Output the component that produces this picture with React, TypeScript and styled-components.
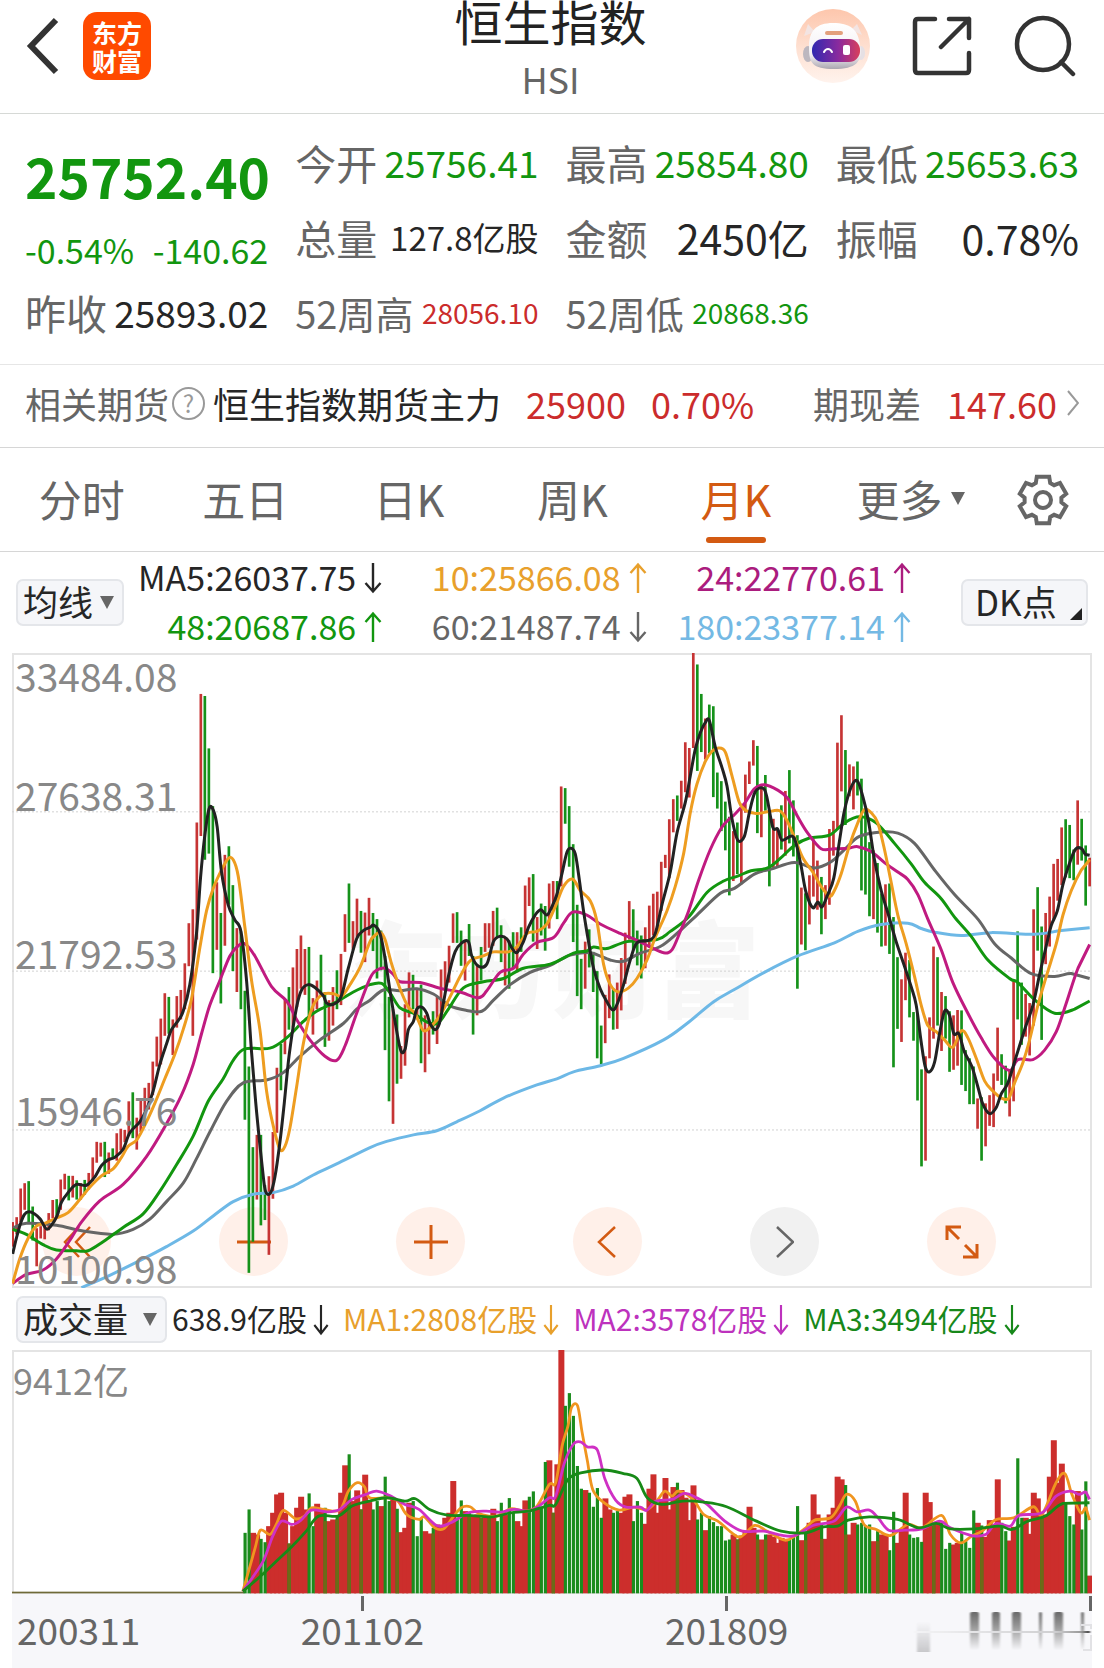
import React, { useState } from "react";
import styled, { createGlobalStyle } from "styled-components";

const GREEN = "#12960f";
const RED = "#cb2c2c";
const ACCENT = "#d35a12";
const INK = "#262626";
const MUTED = "#666666";

const GlobalStyle = createGlobalStyle`
  * { box-sizing: border-box; }
  body {
    margin: 0;
    background: #ffffff;
    color: ${INK};
    font-family: "Noto Sans CJK SC", "Noto Sans", sans-serif;
  }
  button, select { font-family: inherit; color: inherit; }
  button { border: 0; padding: 0; background: none; cursor: pointer; }
  h1, p, dl, dt, dd { margin: 0; font-weight: 400; }
`;

/* ---------- header ---------- */

const Header = styled.header`
  display: grid;
  grid-template-columns: 1fr auto 1fr;
  height: 114px;
  padding: 0 28px 0 25px;
  border-bottom: 1px solid #d6d9d6;
`;

const HeaderLeft = styled.div`
  display: flex;
  gap: 24px;
  padding-top: 12px;
`;

const HeaderRight = styled.div`
  display: flex;
  justify-content: flex-end;
  gap: 42px;
  padding-top: 9px;
`;

const IconButton = styled.button`
  display: flex;
  align-items: center;
  height: 74px;

  svg { display: block; }
`;

const BackButton = styled(IconButton)`
  height: 68px;
`;

const Logo = styled.div`
  display: grid;
  place-content: center;
  width: 68px;
  height: 68px;
  border-radius: 14px;
  background: #ff4a00;
  color: #ffffff;
  font-size: 25px;
  line-height: 28px;
  font-weight: 700;
  text-align: center;
`;

const Title = styled.div`
  text-align: center;

  h1 { font-size: 48px; line-height: 40px; font-weight: 400; color: #222222; }
  p { margin-top: 18px; font-size: 36px; line-height: 40px; color: ${MUTED}; }
`;

/* ---------- quote ---------- */

const Quote = styled.section`
  display: grid;
  grid-template-columns: repeat(4, minmax(0, 1fr));
  grid-auto-rows: 75px;
  column-gap: 27px;
  padding: 11px 25px 14px;
  border-bottom: 1px solid #e6e6e6;
`;

const PriceBlock = styled.div`
  grid-row: span 2;
  color: ${GREEN};
`;

const Price = styled.div`
  font-size: 55px;
  line-height: 100px;
  font-weight: 700;
`;

const Change = styled.div`
  display: flex;
  justify-content: space-between;
  font-size: 34px;
  line-height: 50px;
`;

const Stat = styled.dl`
  display: flex;
  align-items: center;
  justify-content: space-between;
  white-space: nowrap;
`;

const StatLabel = styled.dt<{ $size: number }>`
  font-size: ${(p) => p.$size}px;
  line-height: 75px;
  color: ${MUTED};
`;

const StatValue = styled.dd<{ $size: number; $color: string }>`
  font-size: ${(p) => p.$size}px;
  line-height: 75px;
  color: ${(p) => p.$color};
`;

/* ---------- futures strip ---------- */

const Futures = styled.a`
  display: flex;
  align-items: center;
  justify-content: space-between;
  height: 83px;
  padding: 0 25px 6px;
  border-bottom: 1px solid #d6d6d6;
  color: ${INK};
  font-size: 36px;
  line-height: 48px;
  text-decoration: none;
  white-space: nowrap;
`;

const FuturesGroup = styled.span<{ $gap: number }>`
  display: flex;
  align-items: center;
  gap: ${(p) => p.$gap}px;
`;

const Tone = styled.span<{ $color: string }>`
  color: ${(p) => p.$color};
`;

const HelpMark = styled.span`
  display: grid;
  place-items: center;
  width: 33px;
  height: 33px;
  margin: 0 8px 0 3px;
  border: 2px solid #999999;
  border-radius: 50%;
  color: #999999;
  font-size: 24px;
  line-height: 28px;
`;

/* ---------- tabs ---------- */

const Tabs = styled.nav`
  display: grid;
  grid-template-columns: repeat(6, 4fr) 3fr;
  height: 104px;
  border-bottom: 1px solid #d6d6d6;
`;

const Tab = styled.button<{ $active?: boolean }>`
  display: flex;
  flex-direction: column;
  align-items: center;
  padding-top: 19px;
  font-size: 43px;
  line-height: 62px;
  color: ${(p) => (p.$active ? ACCENT : MUTED)};

  &::after {
    content: "";
    width: 60px;
    height: 6px;
    margin-top: 8px;
    border-radius: 3px;
    background: ${(p) => (p.$active ? ACCENT : "transparent")};
  }
`;

const MoreLabel = styled.span`
  display: flex;
  align-items: center;
  gap: 8px;
  padding-left: 22px;
`;

const GearButton = styled.button`
  display: grid;
  place-items: center;
`;

/* ---------- averages legend ---------- */

const Averages = styled.section`
  display: flex;
  align-items: center;
  height: 101px;
  padding: 0 16px;
`;

const Picker = styled.div<{ $width: number }>`
  display: grid;
  align-items: center;
  flex: none;
  width: ${(p) => p.$width}px;
  height: 47px;
  border: 2px solid #e4e6ea;
  border-radius: 7px;
  background: #f5f6f9;

  > * { grid-area: 1 / 1; }
  svg { justify-self: end; margin-right: 8px; pointer-events: none; }
`;

const PickerSelect = styled.select`
  appearance: none;
  width: 100%;
  height: 43px;
  padding: 0 0 4px 5px;
  border: 0;
  background: transparent;
  font-size: 35px;
  line-height: 39px;
  color: ${INK};
`;

const DkButton = styled.button`
  display: flex;
  align-items: center;
  justify-content: space-between;
  flex: none;
  width: 127px;
  height: 47px;
  padding: 0 4px 4px 12px;
  border: 2px solid #e4e6ea;
  border-radius: 7px;
  background: #f5f6f9;
  font-size: 35px;
  line-height: 39px;
  white-space: nowrap;

  svg { align-self: flex-end; }
`;

const AverageGrid = styled.div`
  display: grid;
  grid-template-columns: 243fr 265fr 265fr;
  flex: 1;
  margin: 0 50px 0 14px;
  padding-bottom: 4px;
  font-size: 34px;
  line-height: 49px;
`;

const Reading = styled.span<{ $color: string; $gap: number }>`
  display: flex;
  align-items: center;
  justify-content: flex-end;
  gap: ${(p) => p.$gap}px;
  color: ${(p) => p.$color};
  white-space: nowrap;

  svg { margin-top: 4px; }
`;

/* ---------- charts ---------- */

const Plot = styled.section<{ $height: number }>`
  display: grid;
  grid-template-columns: 100%;
  grid-template-rows: 100%;
  height: ${(p) => p.$height}px;
  margin: 0 12px;
  box-shadow: inset 0 0 0 2px #e4e4e4;

  > * { grid-area: 1 / 1; }
`;

const ChartSvg = styled.svg`
  display: block;
  width: 100%;
  height: 100%;
  pointer-events: none;
`;

const Watermark = styled.div`
  place-self: center;
  padding-bottom: 12px;
  font-size: 104px;
  line-height: 120px;
  font-weight: 900;
  color: #f7f7f7;
`;

const Scale = styled.div`
  display: grid;
  grid-template-rows: repeat(4, 1fr);
  padding: 0 0 4px 3px;
  color: #888888;
  font-size: 39px;
  line-height: 34px;
  pointer-events: none;
`;

const Band = styled.div`
  display: flex;
  flex-direction: column;
  justify-content: flex-end;

  &:first-child { justify-content: space-between; padding-top: 5px; }
`;

const Controls = styled.div`
  display: flex;
  align-self: end;
  justify-content: space-between;
  padding: 0 96px 12px 30px;
`;

const RoundButton = styled.button<{ $dim?: boolean }>`
  display: grid;
  place-items: center;
  width: 69px;
  height: 69px;
  border-radius: 50%;
  background: ${(p) => (p.$dim ? "#f1f1f1" : "#fff0e9")};
  color: ${(p) => (p.$dim ? MUTED : ACCENT)};
`;

const VolumeBar = styled.section`
  display: flex;
  align-items: center;
  gap: 5px;
  height: 62px;
  padding: 0 16px;
  font-size: 30px;
  line-height: 44px;
`;

const VolumeReadings = styled.div`
  display: flex;
  gap: 14px;
  padding-bottom: 3px;
`;

const VolumeMax = styled.span`
  padding: 4px 0 0 1px;
  font-size: 36px;
  line-height: 50px;
  color: #888888;
`;

const Axis = styled.footer`
  display: grid;
  grid-template-columns: 168fr 364fr 364fr 183fr;
  height: 74px;
  margin: 0 12px;
  background: #f7f7fa;
  color: ${MUTED};
  font-size: 37px;
  line-height: 36px;
`;

const AxisCell = styled.div<{ $align: string; $tick?: boolean }>`
  display: flex;
  flex-direction: column;
  align-items: ${(p) => p.$align};
  padding-top: 2px;
  min-width: 0;

  &::before {
    content: "";
    flex: none;
    width: 3px;
    height: 15px;
    background: ${(p) => (p.$tick ? MUTED : "transparent")};
  }
  &:first-child { padding-left: 5px; }
`;

/* ---------- chart data ---------- */

// One entry per month: direction, top and bottom of the candle in plot units.
const CANDLES = `
R1400-1460 R1388-1430 R1318-1400 R1305-1370 G1300-1400 G1362-1445 R1415-1508 R1410-1440 R1405-1442 R1378-1420
R1346-1390 G1344-1385 R1296-1370 R1282-1320 G1287-1347 R1287-1340 G1298-1345 R1305-1345 G1297-1333 R1280-1320
R1242-1300 R1204-1255 R1206-1240 G1204-1290 R1230-1282 G1220-1243 R1183-1250 R1172-1225 R1175-1205 R1105-1190
G1083-1195 R1145-1223 R1098-1180 R1072-1130 R1060-1125 R1008-1090 R947-1020 R903-1015 R841-945 G850-940
R905-992 R848-925 R833-905 R768-880 R670-775 R636-945 R424-710 R110-457 G115-515 G243-500
G384-792 R570-735 G645-866 R503-725 G482-625 G577-787 R682-838 G690-880 G835-1150 G1020-1524
G1217-1448 R1187-1345 G1187-1408 G1310-1395 R1288-1480 R1180-1343 R1023-1182 G965-1078 R856-990 G826-930
R778-925 R733-875 R700-830 R733-845 G728-905 R853-942 R810-880 G747-850 G838-972 R858-957
R826-920 G785-880 R745-870 R648-740 G573-718 R665-735 R610-705 G640-742 R644-765 R608-700
G645-738 G660-805 G688-785 G750-980 G850-1105 R880-1160 G893-1062 R970-1050 R868-1018 R790-900
G796-880 R828-905 G820-1012 R895-1034 R905-990 G885-942 R850-965 R783-900 R763-835 R725-815
R646-718 G643-718 G688-774 R712-810 G672-750 G750-942 R770-895 G728-810 R670-740 R670-730
R640-725 G632-705 G675-765 R705-822 G712-830 G692-780 R692-790 G680-740 R578-700 R558-628
G550-715 R655-733 G622-700 G628-737 R573-683 R567-640 G567-660 R336-580 G340-427 G384-532
G477-716 G625-848 G757-880 R715-830 G685-778 G740-838 G787-1000 G920-1015 R845-963 R795-902
G830-930 R815-928 R755-883 R693-818 R616-710 G636-735 G688-773 G700-805 R680-780 R627-730
R598-700 R593-680 R520-640 R503-535 R416-560 R367-448 G358-420 R322-390 R228-350 R242-363
R10-242 G38-298 G110-252 R170-270 G136-255 G140-362 G302-390 G323-445 G373-492 G410-602
R445-567 G424-550 R378-575 R307-400 R275-330 R223-285 G237-450 R330-460 G308-395 G395-580
R415-535 R440-535 G382-490 R347-505 G296-475 G370-507 G455-830 R583-722 G597-736 R553-673
R465-605 R517-637 G557-697 R577-660 R440-625 R420-505 R229-440 R162-348 G247-430 R282-360
R287-392 G275-358 G317-590 G395-600 G472-653 R492-660 G523-693 G597-727 R575-725 G573-745
G655-1022 G753-928 R807-960 R742-858 G760-900 G887-957 G892-1103 G1027-1264 R995-1250 R900-1000
R727-952 G753-920 R838-982 G848-952 G885-1033 R895-1028 R882-1018 G883-1065 G980-1080 G1000-1112
G1020-1112 R1098-1172 G1095-1250 R1110-1215 R1090-1165 R1037-1168 R925-1055 G990-1065 G1018-1110 R1030-1142
R808-1105 G690-905 G815-967 R843-947 R865-993 R636-920 G582-737 G678-955 R645-770 R605-727
R525-660 R513-615 R436-577 G416-558 G430-560 G490-565 R370-527 G415-517 G480-627 R510-580`
  .trim()
  .split(/\s+/)
  .map((item) => {
    const [top, bottom] = item.slice(1).split("-").map(Number);
    return { up: item[0] === "R", top: top - 10, bottom: bottom - 10 };
  });

// Volume bars begin at month 58; earlier months are near zero.
const VOLUME_START = 58;
const VOLUMES = `
G760 G690 R760 R765 G778 G788 R740 R700 R645 R640 R700 G792 R740 R685 R652 R690 G642 G740 R673 R690
G685 R725 R720 G710 R640 R558 G525 R665 R633 G690 R586 R668 G690 G665 R680 G592 G665 R660 G688 R758
R745 R670 G665 G770 G715 R755 R762 G745 R735 R742 R715 R700 R605 G715 G663 R695 G700 R710 R705 G715
R710 G712 R688 G725 G670 R705 G656 G700 R725 R740 R663 G652 G636 R685 G685 G548 R543 G700 R555 R213
G380 G342 G410 G560 G628 R632 G640 G682 G626 G715 R657 R690 G700 G695 R700 R652 R645 G725 G665 G700
R733 R628 R585 R700 R660 R596 R690 R623 G610 R632 R655 R722 R618 G720 G700 R752 G710 G728 G740 G740
G783 G780 R765 G780 R768 R755 R682 R745 G765 R780 G765 R765 R772 R790 R775 R780 G780 G770 G680 R782
G755 R730 R645 R705 G735 R778 R705 R685 R592 R600 G617 R765 R730 G735 G730 G740 G735 R785 G755 R765
R765 G812 G697 R790 R750 R640 G765 G775 G773 G787 R640 R668 G735 R725 G730 G808 G790 R795 R790 G760
G785 G805 G693 R730 G738 R772 R722 R740 R600 G730 G755 R783 R742 G537 G715 R715 R763 R640 R657 G715
R705 R592 R483 R610 R553 G672 G710 G735 R635 G750 G606 R888`
  .trim()
  .split(/\s+/)
  .map((item) => ({ up: item[0] === "R", top: Number(item.slice(1)) - 213 }));

type Panel = { x: number; points: string };
type Line = { color: string; panels: Panel[] };

const PRICE_LINES: Line[] = [
  {
    color: "#6db8e6",
    panels: [
      { x: -37, points: "245,1560 330,1530 430,1490 500,1460 580,1422 640,1385 700,1350 760,1332 820,1328 880,1312 940,1285 1010,1258 1110,1218" },
      { x: 1073, points: "50,1203 130,1187 200,1177 260,1155 330,1128 400,1097 500,1065 560,1050 610,1033 690,1018 760,1000 880,955 950,915 1030,862" },
      { x: 2165, points: "0,832 90,790 190,750 300,718 370,690 440,673 520,670 560,683 600,692 680,700 770,693 900,697 980,688 1065,681" },
    ],
  },
  {
    color: "#666666",
    panels: [
      { x: -37, points: "39,1415 80,1403 170,1408 250,1422 340,1430 400,1418 450,1393 500,1350 550,1305 590,1245 630,1180 680,1105 730,1060 800,1053 850,1035 900,995 960,955 1030,915 1070,880 1110,858" },
      { x: 1073, points: "40,833 90,835 140,830 190,843 240,872 290,883 335,885 370,858 420,820 480,790 540,773 600,748 660,742 720,760 760,763 810,743 870,727 920,695 980,650 1050,597" },
      { x: 2165, points: "0,585 60,550 110,538 180,522 240,535 290,520 330,490 375,458 440,447 490,450 540,475 600,540 660,600 730,660 780,720 830,755 890,793 960,800 1010,793 1065,805" },
    ],
  },
  {
    color: GREEN,
    panels: [
      { x: -37, points: "39,1418 80,1430 130,1455 170,1468 230,1470 265,1470 310,1448 370,1413 430,1380 480,1325 530,1260 580,1190 625,1105 670,1050 700,1005 735,977 810,975 860,950 910,910 950,885 1010,862 1060,838 1110,820" },
      { x: 1073, points: "35,817 60,840 90,877 130,890 175,913 205,913 235,880 280,828 340,813 400,805 460,780 540,770 610,743 650,738 670,728 710,732 770,715 860,710 900,690 955,655 1010,595 1060,567" },
      { x: 2165, points: "10,555 50,542 100,535 140,510 180,480 225,462 285,455 330,425 375,410 425,425 480,475 530,525 570,570 620,610 660,655 710,702 760,760 825,805 850,815 900,857 960,890 1020,880 1065,860" },
    ],
  },
  {
    color: "#c01a80",
    panels: [
      { x: -37, points: "39,1550 80,1528 130,1517 170,1490 210,1445 245,1400 300,1348 370,1308 440,1240 500,1160 545,1090 580,1015 605,940 630,870 660,810 690,750 715,725 735,720 765,750 815,825 860,860 890,905 930,955 975,995 1010,1005 1035,970 1070,890 1110,805" },
      { x: 1073, points: "20,785 45,780 70,795 90,813 150,815 215,830 270,838 325,852 350,835 390,790 430,780 460,745 500,717 550,705 580,670 607,643 650,650 690,672 750,695 800,712 840,728 880,742 905,735 930,690 955,640 985,565 1020,490 1055,435 1080,413" },
      { x: 2165, points: "0,405 30,378 60,342 90,332 130,345 160,365 190,410 220,450 260,488 300,488 340,487 370,483 410,495 450,522 490,545 520,563 550,600 580,660 620,735 655,815 700,890 740,950 780,1000 825,1030 850,1003 895,1003 930,980 965,935 995,865 1030,780 1065,722" },
    ],
  },
  {
    color: "#ee9d20",
    panels: [
      { x: -37, points: "39,1550 60,1490 85,1440 110,1410 135,1403 170,1390 205,1377 240,1345 270,1315 305,1287 340,1270 365,1242 385,1215 412,1198 440,1155 465,1110 495,1050 525,990 550,930 575,855 600,730 620,640 640,585 665,540 685,512 700,515 715,555 735,680 755,810 780,930 800,1080 820,1165 840,1222 855,1215 870,1170 890,1070 910,965 935,880 965,845 1000,842 1025,848 1050,820 1080,778 1110,715" },
      { x: 1073, points: "12,702 30,692 45,710 65,770 90,830 115,875 135,890 160,932 185,920 210,895 240,850 270,800 300,762 340,750 370,740 415,740 440,728 470,695 500,690 530,672 555,630 580,580 607,562 630,590 660,615 680,665 700,770 720,820 745,838 775,828 800,805 830,760 855,705 890,640 915,580 940,500 960,400 980,330 1005,275 1025,250 1045,242 1065,252 1085,310" },
      { x: 2165, points: "15,375 35,395 65,402 100,398 135,395 155,415 180,460 205,510 235,545 260,580 285,604 300,590 320,550 345,480 370,425 390,392 410,400 430,425 450,490 470,570 490,650 515,720 540,800 560,870 580,920 605,935 630,955 655,973 680,933 700,950 725,1000 750,1055 775,1080 800,1097 822,1098 840,1060 865,1010 885,955 910,870 935,800 965,720 985,650 1010,590 1040,540 1065,515" },
    ],
  },
  {
    color: "#222222",
    panels: [
      { x: -37, points: "39,1478 50,1440 62,1405 74,1382 87,1375 105,1380 122,1393 140,1417 155,1408 172,1385 185,1352 205,1328 230,1308 260,1310 285,1290 305,1262 325,1248 345,1242 370,1222 390,1182 420,1155 440,1125 460,1080 480,1015 500,965 515,930 535,908 550,885 570,820 590,695 602,560 615,455 628,390 640,393 652,435 665,545 685,625 705,662 723,690 740,810 755,985 770,1130 787,1265 797,1325 812,1328 825,1290 840,1205 853,1110 868,990 890,875 905,833 925,820 945,827 970,847 980,865 1000,868 1023,850 1045,780 1070,708 1090,688 1110,680" },
      { x: 1073, points: "12,675 30,695 45,755 60,835 75,910 92,980 105,978 115,930 130,910 140,880 155,875 170,890 180,915 195,930 208,915 220,865 235,800 255,740 275,718 295,715 305,750 325,775 350,770 370,715 390,702 410,708 425,730 440,742 460,715 475,680 495,650 512,637 530,650 545,630 560,600 575,550 590,497 602,487 615,500 625,550 640,640 655,715 670,780 690,830 710,862 728,882 742,865 760,820 780,760 800,718 835,712 855,695 875,625 900,545 920,450 945,375 960,310 975,245 990,205 1005,180 1017,175 1035,240 1055,290 1070,335 1085,415" },
      { x: 2165, points: "10,467 30,458 45,400 62,350 85,340 97,360 115,435 130,440 143,467 172,457 185,475 200,530 215,595 235,632 250,618 263,630 280,600 298,560 315,470 330,395 350,338 368,322 385,360 402,420 420,515 440,590 462,650 485,715 510,775 530,825 545,870 560,960 572,1020 585,1033 600,1010 615,940 630,885 645,895 658,940 673,940 690,985 712,1020 730,1070 745,1112 765,1135 785,1120 800,1087 820,1060 845,995 870,930 895,870 915,795 935,725 950,675 968,640 985,575 1005,523 1022,490 1040,487 1052,502 1065,504" },
    ],
  },
];

const VOLUME_LINES: Line[] = [
  {
    color: "#f0951f",
    panels: [
      { x: -35, points: "690,935 705,880 725,805 740,752 767,765 785,735 805,693 840,718 865,710 885,685 920,690 965,692 990,635 1015,610 1035,622 1050,655 1100,655 1130,665 1155,705 1190,720 1205,712 1235,745 1260,748 1285,715 1310,685 1335,682 1360,702 1410,710 1450,688 1490,695 1525,680 1560,615" },
      { x: 1533, points: "10,610 28,500 45,440 55,385 72,380 85,460 100,545 115,630 145,668 190,692 230,683 270,690 300,660 320,635 340,650 360,635 400,660 430,705 470,725 510,760 535,772 575,738 610,755 660,782 690,768 720,745 745,722 790,715 815,680 835,645 860,665 885,735 920,750 960,768 1010,735 1050,745 1105,708 1130,765 1160,790 1190,770 1220,755 1260,720 1310,715 1365,682 1390,705 1430,610 1455,583 1475,645 1500,700 1515,685 1525,722" },
    ],
  },
  {
    color: "#cf30c4",
    panels: [
      { x: -35, points: "690,935 720,890 750,840 775,770 800,725 830,735 855,722 885,692 930,697 965,690 1000,660 1040,645 1070,635 1110,650 1150,675 1190,690 1240,738 1280,730 1330,700 1380,695 1420,698 1460,690 1500,695 1530,680 1560,655" },
      { x: 1533, points: "10,650 35,550 60,495 80,488 100,503 128,512 150,600 180,662 210,683 250,683 268,693 295,665 340,660 375,642 410,655 440,675 490,725 540,755 600,755 680,770 740,738 800,725 835,683 865,697 900,692 925,715 955,752 1000,752 1050,748 1100,725 1130,745 1190,768 1230,765 1260,732 1300,740 1325,708 1390,700 1430,650 1470,635 1495,645 1515,638 1525,660" },
    ],
  },
  {
    color: "#178a17",
    panels: [
      { x: -35, points: "690,935 740,890 780,850 830,800 870,755 905,710 960,710 1000,680 1050,665 1100,655 1150,665 1180,658 1220,690 1270,707 1330,708 1400,712 1450,700 1500,695 1560,678" },
      { x: 1533, points: "10,675 45,600 85,580 145,572 200,582 240,597 270,655 310,675 370,665 430,668 495,682 580,725 650,755 720,760 770,742 810,740 840,722 900,712 980,720 1040,745 1090,732 1130,748 1200,748 1270,740 1305,750 1350,725 1400,710 1450,672 1525,670" },
    ],
  },
];

// Joins the panels of a line and rounds its corners with cubic segments.
function smoothPath(line: Line, top: number): string {
  const pts = line.panels.flatMap((panel) =>
    panel.points.split(" ").map((pair) => {
      const [x, y] = pair.split(",").map(Number);
      return [x + panel.x, y - top];
    })
  );
  let d = `M${pts[0][0]} ${pts[0][1]}`;
  for (let i = 1; i < pts.length - 1; i++) {
    const p0 = pts[i - 1];
    const p1 = pts[i];
    const p2 = pts[i + 1];
    const before = i > 1 ? pts[i - 2] : p0;
    d += `C${p0[0] + (p1[0] - before[0]) / 6} ${p0[1] + (p1[1] - before[1]) / 6} ${p1[0] - (p2[0] - p0[0]) / 6} ${p1[1] - (p2[1] - p0[1]) / 6} ${p1[0]} ${p1[1]}`;
  }
  const last = pts[pts.length - 1];
  return `${d}L${last[0]} ${last[1]}`;
}

/* ---------- icons ---------- */

const Arrow = ({ up, narrow }: { up?: boolean; narrow?: boolean }) => (
  <svg width={narrow ? 16 : 18} height="32" viewBox="0 0 18 32" fill="none" stroke="currentColor" strokeWidth="2.4" preserveAspectRatio="none" aria-hidden="true">
    <path d={up ? "M9 31V3M1.5 11 9 2.5 16.5 11" : "M9 1V29M1.5 21 9 29.5 16.5 21"} />
  </svg>
);

const Triangle = ({ size = 14 }: { size?: number }) => (
  <svg width={size} height="13" viewBox="0 0 14 13" aria-hidden="true">
    <path d="M0 0H14L7 13Z" fill="#666" />
  </svg>
);

const Gear = () => {
  const points: string[] = [];
  for (let k = 0; k < 6; k++) {
    for (const [offset, radius] of [[-23, 18.5], [-15, 24], [15, 24], [23, 18.5]]) {
      const angle = ((k * 60 - 90 + offset) * Math.PI) / 180;
      points.push(`${(27 + radius * Math.cos(angle)).toFixed(1)},${(27 + radius * Math.sin(angle)).toFixed(1)}`);
    }
  }
  return (
    <svg width="54" height="54" viewBox="0 0 54 54" fill="none" stroke="#666" strokeWidth="4" aria-hidden="true">
      <polygon points={points.join(" ")} />
      <circle cx="27" cy="27" r="8" />
    </svg>
  );
};

const Robot = () => (
  <svg width="74" height="74" viewBox="0 0 74 74" aria-hidden="true">
    <defs>
      <linearGradient id="halo" x1="0" y1="0" x2="0" y2="1">
        <stop offset="0" stopColor="#fdc6ac" />
        <stop offset="0.5" stopColor="#fedfd0" />
        <stop offset="1" stopColor="#fff3ed" />
      </linearGradient>
      <linearGradient id="shell" x1="0" y1="0" x2="0" y2="1">
        <stop offset="0" stopColor="#ffffff" />
        <stop offset="0.7" stopColor="#f3f0f3" />
        <stop offset="1" stopColor="#aaa6b0" />
      </linearGradient>
      <linearGradient id="visor" x1="0" y1="0" x2="1" y2="0">
        <stop offset="0" stopColor="#3029b0" />
        <stop offset="0.55" stopColor="#8a2a9e" />
        <stop offset="1" stopColor="#d8405c" />
      </linearGradient>
    </defs>
    <circle cx="37" cy="37" r="37" fill="url(#halo)" />
    <path d="M8 27 12 15 19 23ZM66 26 61 15 55 21Z" fill="#f3e4e2" />
    <ellipse cx="12" cy="45" rx="5" ry="8" fill="#bcb7bf" />
    <ellipse cx="65" cy="44" rx="4" ry="7" fill="#e6e0e4" />
    <path d="M13 38C13 22 20 14 37 14S62 20 64 36C67 53 60 60 38 60S13 54 13 38Z" fill="url(#shell)" />
    <rect x="29" y="22" width="18" height="4" rx="2" fill="#e3a07c" />
    <rect x="16" y="30" width="48" height="23" rx="11" fill="url(#visor)" />
    <path d="M28 43C30 39 34 39 36 43" fill="none" stroke="#fff" strokeWidth="2" strokeLinecap="round" />
    <rect x="47" y="36" width="7" height="10" rx="2" fill="#fff" />
  </svg>
);

/* ---------- charts ---------- */

const PriceChart = () => (
  <ChartSvg viewBox="0 0 3237 1551" preserveAspectRatio="none" role="img" aria-label="恒生指数 月K">
    {[388, 777, 1165].map((y) => (
      <line key={y} x1="0" x2="3237" y1={y} y2={y} stroke="#d2d2d2" strokeWidth="1" strokeDasharray="2 2" vectorEffect="non-scaling-stroke" />
    ))}
    {CANDLES.map((c, i) => (
      <rect key={i} x={i * 12 - 2} y={c.top} width="8" height={c.bottom - c.top} fill={c.up ? "#c63434" : "#15921a"} />
    ))}
    {PRICE_LINES.map((line) => (
      <path key={line.color} d={smoothPath(line, 10)} fill="none" stroke={line.color} strokeWidth="3" strokeLinejoin="round" vectorEffect="non-scaling-stroke" />
    ))}
  </ChartSvg>
);

const VolumeChart = () => {
  const centre = (i: number) => 2 + (VOLUME_START + i) * 11.362;
  const redTop = (i: number) => (VOLUMES[i] && VOLUMES[i].up ? VOLUMES[i].top : 727);
  return (
    <ChartSvg viewBox="0 0 3065 730" preserveAspectRatio="none" role="img" aria-label="成交量">
      <rect x="0" y="723" width="660" height="5" fill="#6f6a38" />
      {VOLUMES.map((v, i) => v.up && <rect key={i} x={centre(i) - 8} y={v.top} width="17" height={728 - v.top} fill="#cc2e2c" />)}
      {VOLUMES.map((v, i) => {
        if (v.up) return null;
        const mixed = Math.max(v.top, redTop(i - 1), redTop(i + 1));
        return (
          <g key={i}>
            <rect x={centre(i) - 4} y={v.top} width="9" height={728 - v.top} fill="#1a8c1c" />
            {mixed < 727 && <rect x={centre(i) - 4} y={mixed} width="9" height={728 - mixed} fill="#6d6a17" />}
          </g>
        );
      })}
      {VOLUME_LINES.map((line) => (
        <path key={line.color} d={smoothPath(line, 213)} fill="none" stroke={line.color} strokeWidth="2.8" strokeLinejoin="round" vectorEffect="non-scaling-stroke" />
      ))}
    </ChartSvg>
  );
};

// The last date label fades out into vertical streaks.
const FadedLabel = () => (
  <svg width="183" height="46" viewBox="0 0 183 46" aria-hidden="true">
    <defs>
      <linearGradient id="streak" x1="0" y1="0" x2="0" y2="1">
        <stop offset="0" stopColor="#6a6a6a" />
        <stop offset="0.4" stopColor="#9a9a9a" />
        <stop offset="1" stopColor="#f5f5f8" />
      </linearGradient>
      <linearGradient id="smudge" x1="0" y1="0" x2="0" y2="1">
        <stop offset="0" stopColor="#f7f7fa" />
        <stop offset="1" stopColor="#b4b4b6" />
      </linearGradient>
      <linearGradient id="trail" x1="0" y1="0" x2="1" y2="0">
        <stop offset="0" stopColor="#f4f4f6" />
        <stop offset="0.8" stopColor="#cfcfd1" />
        <stop offset="0.95" stopColor="#9a9a9a" />
        <stop offset="1" stopColor="#3c3c3c" />
      </linearGradient>
      <filter id="soften">
        <feGaussianBlur stdDeviation="0.8 0.4" />
      </filter>
    </defs>
    <g filter="url(#soften)">
      {[[61, 9], [83, 8], [103, 9], [130, 3], [145, 9], [172, 3]].map(([x, w]) => (
        <rect key={x} x={x} y="1" width={w} height="38" rx="2" fill="url(#streak)" />
      ))}
      <rect x="8" y="10" width="13" height="31" fill="url(#smudge)" opacity="0.7" />
      <rect x="5" y="20" width="176" height="2" fill="url(#trail)" />
    </g>
    <path d="M172 14H182V18M182 24V39H174" fill="none" stroke="#e2e2e5" strokeWidth="2" />
  </svg>
);

/* ---------- content ---------- */

const STATS = [
  { label: "今开", value: "25756.41", size: 37, color: GREEN },
  { label: "最高", value: "25854.80", size: 37, color: GREEN },
  { label: "最低", value: "25653.63", size: 37, color: GREEN },
  { label: "总量", value: "127.8亿股", size: 33, color: INK },
  { label: "金额", value: "2450亿", size: 41, color: INK },
  { label: "振幅", value: "0.78%", size: 41, color: INK },
  { label: "昨收", value: "25893.02", size: 37, color: INK },
  { label: "52周高", value: "28056.10", size: 28, color: RED },
  { label: "52周低", value: "20868.36", size: 28, color: GREEN },
];

const AVERAGES = [
  { text: "MA5:26037.75", up: false, color: INK },
  { text: "10:25866.08", up: true, color: "#e8a02c" },
  { text: "24:22770.61", up: true, color: "#ab1c7e" },
  { text: "48:20687.86", up: true, color: GREEN },
  { text: "60:21487.74", up: false, color: MUTED },
  { text: "180:23377.14", up: true, color: "#74b9e4" },
];

const VOLUME_READINGS = [
  { text: "638.9亿股", color: INK },
  { text: "MA1:2808亿股", color: "#e8a02c" },
  { text: "MA2:3578亿股", color: "#bd32bd" },
  { text: "MA3:3494亿股", color: "#17881a" },
];

const PERIODS = ["分时", "五日", "日K", "周K", "月K"];

export default function App() {
  const [period, setPeriod] = useState("月K");

  return (
    <>
      <GlobalStyle />
      <Header>
        <HeaderLeft>
          <BackButton aria-label="返回">
            <svg width="34" height="58" viewBox="0 0 34 58" fill="none" stroke="#333" strokeWidth="6">
              <path d="M31 3 6 29 31 55" />
            </svg>
          </BackButton>
          <Logo>东方<br />财富</Logo>
        </HeaderLeft>
        <Title>
          <h1>恒生指数</h1>
          <p>HSI</p>
        </Title>
        <HeaderRight>
          <IconButton aria-label="助手"><Robot /></IconButton>
          <IconButton aria-label="分享">
            <svg width="60" height="60" viewBox="0 0 60 60" fill="none" stroke="#333" strokeWidth="4.5" strokeLinecap="round" strokeLinejoin="round">
              <path d="M23 3H6Q3 3 3 6V54Q3 57 6 57H54Q57 57 57 54V37M37 3H57V22M57 3 29 31" />
            </svg>
          </IconButton>
          <IconButton aria-label="搜索">
            <svg width="62" height="62" viewBox="0 0 62 62" fill="none" stroke="#333" strokeWidth="4.5" strokeLinecap="round">
              <circle cx="29" cy="29" r="26" />
              <path d="M47 47 59 59" />
            </svg>
          </IconButton>
        </HeaderRight>
      </Header>

      <Quote>
        <PriceBlock>
          <Price>25752.40</Price>
          <Change><span>-0.54%</span><span>-140.62</span></Change>
        </PriceBlock>
        {STATS.map((s) => (
          <Stat key={s.label}>
            <StatLabel $size={s.label.length > 2 ? 38 : 41}>{s.label}</StatLabel>
            <StatValue $size={s.size} $color={s.color}>{s.value}</StatValue>
          </Stat>
        ))}
      </Quote>

      <Futures href="#futures">
        <FuturesGroup $gap={25}>
          <FuturesGroup $gap={0}>
            <Tone $color={MUTED}>相关期货</Tone>
            <HelpMark>?</HelpMark>
            <span>恒生指数期货主力</span>
          </FuturesGroup>
          <Tone $color={RED}>25900</Tone>
          <Tone $color={RED}>0.70%</Tone>
        </FuturesGroup>
        <FuturesGroup $gap={26}>
          <Tone $color={MUTED}>期现差</Tone>
          <FuturesGroup $gap={10}>
            <Tone $color={RED}>147.60</Tone>
            <svg width="12" height="26" viewBox="0 0 12 26" fill="none" stroke="#999" strokeWidth="2" aria-hidden="true">
              <path d="M1 1 11 13 1 25" />
            </svg>
          </FuturesGroup>
        </FuturesGroup>
      </Futures>

      <Tabs>
        {PERIODS.map((name) => (
          <Tab key={name} $active={name === period} onClick={() => setPeriod(name)}>{name}</Tab>
        ))}
        <Tab>
          <MoreLabel>更多<Triangle /></MoreLabel>
        </Tab>
        <GearButton aria-label="设置"><Gear /></GearButton>
      </Tabs>

      <Averages>
        <Picker $width={108}>
          <PickerSelect aria-label="均线"><option>均线</option></PickerSelect>
          <Triangle />
        </Picker>
        <AverageGrid>
          {AVERAGES.map((a) => (
            <Reading key={a.text} $color={a.color} $gap={8}>
              {a.text}
              <Arrow up={a.up} />
            </Reading>
          ))}
        </AverageGrid>
        <DkButton>
          DK点
          <svg width="12" height="12" viewBox="0 0 12 12" aria-hidden="true"><path d="M12 0V12H0Z" fill="#222" /></svg>
        </DkButton>
      </Averages>

      <Plot $height={635}>
        <Watermark aria-hidden="true">东方财富</Watermark>
        <Controls>
          <RoundButton aria-label="最早">
            <svg width="28" height="32" viewBox="0 0 28 32" fill="none" stroke="currentColor" strokeWidth="2.5"><path d="M16 1 2 16 16 31M27 1 13 16 27 31" /></svg>
          </RoundButton>
          <RoundButton aria-label="缩小">
            <svg width="34" height="34" viewBox="0 0 34 34" stroke="currentColor" strokeWidth="3"><path d="M0 17H34" /></svg>
          </RoundButton>
          <RoundButton aria-label="放大">
            <svg width="34" height="34" viewBox="0 0 34 34" stroke="currentColor" strokeWidth="3"><path d="M0 17H34M17 0V34" /></svg>
          </RoundButton>
          <RoundButton aria-label="向左">
            <svg width="22" height="32" viewBox="0 0 22 32" fill="none" stroke="currentColor" strokeWidth="2.5"><path d="M18 1 2 16 18 31" /></svg>
          </RoundButton>
          <RoundButton $dim aria-label="向右">
            <svg width="18" height="32" viewBox="0 0 18 32" fill="none" stroke="currentColor" strokeWidth="2.5"><path d="M1 1 17 16 1 31" /></svg>
          </RoundButton>
          <RoundButton aria-label="全屏">
            <svg width="34" height="34" viewBox="0 0 34 34" fill="none" stroke="currentColor" strokeWidth="3"><path d="M2 15V2H16M2 2 14 14M32 19V32H18M32 32 20 20" /></svg>
          </RoundButton>
        </Controls>
        <PriceChart />
        <Scale>
          <Band><span>33484.08</span><span>27638.31</span></Band>
          <Band><span>21792.53</span></Band>
          <Band><span>15946.76</span></Band>
          <Band><span>10100.98</span></Band>
        </Scale>
      </Plot>

      <VolumeBar>
        <Picker $width={151}>
          <PickerSelect aria-label="指标"><option>成交量</option></PickerSelect>
          <Triangle />
        </Picker>
        <VolumeReadings>
          {VOLUME_READINGS.map((v) => (
            <Reading key={v.text} $color={v.color} $gap={6}>
              {v.text}
              <Arrow narrow />
            </Reading>
          ))}
        </VolumeReadings>
      </VolumeBar>

      <Plot $height={244}>
        <VolumeMax>9412亿</VolumeMax>
        <VolumeChart />
      </Plot>

      <Axis>
        <AxisCell $align="flex-start"><span>200311</span></AxisCell>
        <AxisCell $align="center" $tick><span>201102</span></AxisCell>
        <AxisCell $align="center" $tick><span>201809</span></AxisCell>
        <AxisCell $align="flex-end" $tick><FadedLabel /></AxisCell>
      </Axis>
    </>
  );
}
